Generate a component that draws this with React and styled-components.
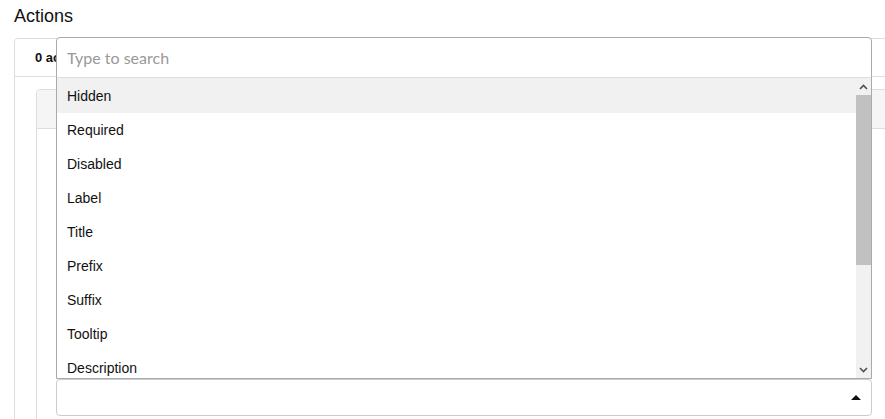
import React from "react";
import styled, { createGlobalStyle } from "styled-components";

const GlobalStyle = createGlobalStyle`
  html, body {
    margin: 0;
    padding: 0;
    overflow: hidden;
    background: #fff;
  }
  body {
    font-family: "Liberation Sans", Arial, sans-serif;
    color: #111;
  }
`;

const Page = styled.div`
  padding: 6px 14px 0;
  width: 900px;
`;

const Heading = styled.h3`
  margin: 0;
  font-size: 18px;
  font-weight: 400;
  line-height: 21px;
  color: #111;
`;

const Card = styled.div`
  margin-top: ${(p) => p.$top || 0}px;
  border: 1px solid #ddd;
  border-radius: 4px;
  background: #fff;
`;

const CardHeader = styled.div`
  height: ${(p) => (p.$shaded ? 38 : 37)}px;
  display: flex;
  align-items: center;
  padding: 0 20px;
  border-bottom: 1px solid #ddd;
  background: ${(p) => (p.$shaded ? "#f5f5f5" : "#fff")};
  font-size: 13px;
  font-weight: 700;
  border-radius: 4px 4px 0 0;
`;

const CardBody = styled.div`
  padding: ${(p) => p.$pad};
`;

const SelectWrap = styled.div`
  position: relative;
`;

const SelectBox = styled.div`
  height: 35px;
  border: 1px solid #ccc;
  border-radius: 4px;
  display: flex;
  align-items: center;
  justify-content: flex-end;
  padding: 0 10px;
  background: #fff;
`;

const Caret = styled.span`
  width: 0;
  height: 0;
  border-left: 5px solid transparent;
  border-right: 5px solid transparent;
  border-bottom: 5px solid #111;
`;

const Dropdown = styled.div`
  position: absolute;
  left: 0;
  right: 0;
  bottom: 100%;
  border: 1px solid #aaa;
  border-radius: 4px 4px 0 0;
  background: #fff;
  display: flex;
  flex-direction: column;
  z-index: 2;
`;

const Search = styled.input`
  height: 40px;
  border: none;
  border-bottom: 1px solid #ddd;
  padding: 0 10px 1px;
  font-family: Lato, "Liberation Sans", sans-serif;
  font-size: 16px;
  outline: none;
  box-sizing: border-box;
  width: 100%;
  background: transparent;
  &::placeholder {
    color: #999;
  }
`;

const ListArea = styled.div`
  height: 300px;
  display: flex;
`;

const Options = styled.ul`
  flex: 1;
  margin: 0;
  padding: 0;
  list-style: none;
  overflow: hidden;
`;

const Option = styled.li`
  height: 34px;
  box-sizing: border-box;
  padding: 0 10px;
  display: flex;
  align-items: center;
  font-size: 14px;
  color: #111;
  background: ${(p) => (p.$active ? "#f1f1f1" : "transparent")};
  &:first-child {
    height: 35px;
    padding-top: 1px;
  }
`;

const Scrollbar = styled.div`
  width: 15px;
  background: #f1f1f1;
  display: flex;
  flex-direction: column;
`;

const ScrollArrow = styled.div`
  height: 17px;
  display: flex;
  align-items: center;
  justify-content: center;
`;

const Thumb = styled.div`
  height: 170px;
  width: 15px;
  background: #c1c1c1;
`;

const Spacer = styled.div`
  flex: 1;
`;

const Chevron = ({ up }) => (
  <svg width="9" height="6" viewBox="0 0 9 6">
    <path
      d={up ? "M1 5 L4.5 1.5 L8 5" : "M1 1 L4.5 4.5 L8 1"}
      fill="none"
      stroke="#505050"
      strokeWidth="1.6"
    />
  </svg>
);

const options = [
  "Hidden",
  "Required",
  "Disabled",
  "Label",
  "Title",
  "Prefix",
  "Suffix",
  "Tooltip",
  "Description",
];

export default function App() {
  return (
    <Page>
      <GlobalStyle />
      <Heading>Actions</Heading>
      <Card $top={11}>
        <CardHeader>0 actions</CardHeader>
        <CardBody $pad="12px 21px 0">
          <Card>
            <CardHeader $shaded />
            <CardBody $pad="250px 19px 20px">
              <SelectWrap>
                <Dropdown>
                  <Search placeholder="Type to search" />
                  <ListArea>
                    <Options>
                      {options.map((o, i) => (
                        <Option key={o} $active={i === 0}>
                          {o}
                        </Option>
                      ))}
                    </Options>
                    <Scrollbar>
                      <ScrollArrow>
                        <Chevron up />
                      </ScrollArrow>
                      <Thumb />
                      <Spacer />
                      <ScrollArrow>
                        <Chevron />
                      </ScrollArrow>
                    </Scrollbar>
                  </ListArea>
                </Dropdown>
                <SelectBox>
                  <Caret />
                </SelectBox>
              </SelectWrap>
            </CardBody>
          </Card>
        </CardBody>
      </Card>
    </Page>
  );
}
